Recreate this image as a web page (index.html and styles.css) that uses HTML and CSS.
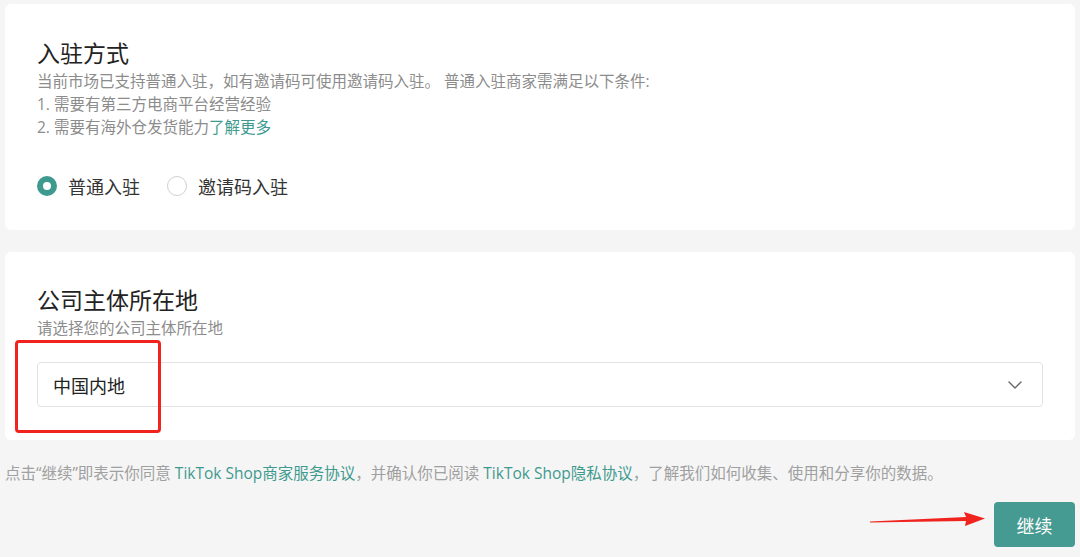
FILE: index.html
```html
<!DOCTYPE html>
<html lang="zh-CN">
<head>
<meta charset="utf-8">
<title>入驻方式</title>
<link rel="stylesheet" href="styles.css">
</head>
<body>
<div class="page">
  <section class="card card-mode">
    <h2 class="title">入驻方式</h2>
    <div class="desc">
      <p>当前市场已支持普通入驻，如有邀请码可使用邀请码入驻。 普通入驻商家需满足以下条件:</p>
      <p>1. 需要有第三方电商平台经营经验</p>
      <p>2. 需要有海外仓发货能力<a class="link" href="#">了解更多</a></p>
    </div>
    <div class="radios">
      <label class="radio"><span class="dot checked"></span><span class="radio-label">普通入驻</span></label>
      <label class="radio"><span class="dot"></span><span class="radio-label">邀请码入驻</span></label>
    </div>
  </section>

  <section class="card card-region">
    <h2 class="title">公司主体所在地</h2>
    <p class="desc-one">请选择您的公司主体所在地</p>
    <div class="select">
      <span class="select-value">中国内地</span>
      <svg class="chevron" width="14" height="8" viewBox="0 0 14 8"><path d="M1 1 L7 7 L13 1" fill="none" stroke="#666" stroke-width="1.4" stroke-linecap="round" stroke-linejoin="round"/></svg>
    </div>
    <div class="mark-box"></div>
  </section>

  <p class="agree">点击“继续”即表示你同意 <a class="link" href="#">TikTok Shop商家服务协议</a>，并确认你已阅读 <a class="link" href="#">TikTok Shop隐私协议</a>，了解我们如何收集、使用和分享你的数据。</p>

  <div class="actions">
    <svg class="arrow" width="120" height="24" viewBox="0 0 120 24"><polygon points="0,14.5 96,10 94,5 115,11.5 95,19 96,14 0,15.5" fill="#f0231e"/></svg>
    <button class="btn">继续</button>
  </div>
</div>
</body>
</html>
```

FILE: styles.css
```css
* { box-sizing: border-box; }
html, body {
  margin: 0;
  padding: 0;
  background: #f5f5f5;
  font-family: "Open Sans", "Noto Sans CJK SC", sans-serif;
  color: #222;
}
.page {
  width: 1080px;
  height: 557px;
  padding: 4px 5px 0 5px;
  overflow: hidden;
}
.card {
  background: #fff;
  border-radius: 6px;
  padding: 32px 32px 32px 32px;
  position: relative;
}
.card-mode { height: 226px; }
.card-region {
  margin-top: 22px;
  height: 188px;
  padding-top: 31px;
}
.title {
  margin: 0;
  font-size: 23px;
  font-weight: 400;
  line-height: 34px;
  color: #222;
}
.desc {
  font-size: 15.5px;
  line-height: 23px;
  color: #8c8c8c;
}
.desc p { margin: 0; }
.link {
  color: #3e9a8e;
  text-decoration: none;
}
.radios {
  display: flex;
  align-items: center;
  gap: 27px;
  margin-top: 35px;
  height: 24px;
}
.radio {
  display: flex;
  align-items: center;
  gap: 11px;
  font-size: 18px;
  color: #333;
}
.dot {
  width: 20px;
  height: 20px;
  border-radius: 50%;
  border: 1.5px solid #d0d0d0;
  background: #fff;
}
.dot.checked {
  border: 6.5px solid #3e9a8e;
}
.desc-one {
  margin: 0;
  font-size: 15.5px;
  line-height: 23px;
  color: #8c8c8c;
}
.select {
  margin-top: 22px;
  height: 45px;
  border: 1px solid #e2e2e2;
  border-radius: 4px;
  display: flex;
  align-items: center;
  justify-content: space-between;
  padding: 0 20px 0 15px;
}
.select-value {
  font-size: 18px;
  color: #222;
}
.mark-box {
  position: absolute;
  left: 10px;
  top: 88px;
  width: 146px;
  height: 93px;
  border: 3px solid #f0231e;
  border-radius: 4px;
}
.agree {
  margin: 22px 0 0 0;
  font-size: 15.5px;
  line-height: 23px;
  color: #a0a0a0;
}
.actions {
  margin-top: 17px;
  display: flex;
  justify-content: flex-end;
  align-items: center;
  gap: 4px;
}
.arrow { display: block; margin-top: -12px; }
.btn {
  width: 81px;
  height: 45px;
  border: none;
  border-radius: 4px;
  background: #459a91;
  color: #fff;
  font-family: "Noto Sans CJK SC", sans-serif;
  font-size: 18px;
}
```
